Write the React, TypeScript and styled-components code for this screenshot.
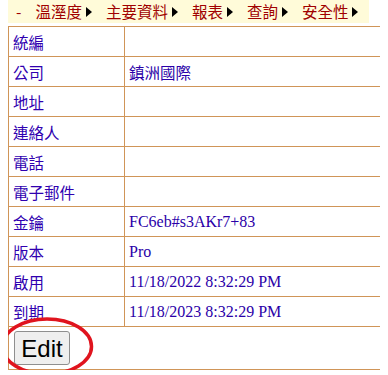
import React from "react";
import styled, { createGlobalStyle } from "styled-components";

const Global = createGlobalStyle`
  html, body { margin: 0; padding: 0; background: #fff; }
  body { margin: 0 8px; font-family: "Liberation Serif", serif; }
`;

const Page = styled.div`
  position: relative;
  width: 375px;
`;

const MenuBar = styled.div`
  display: flex;
  align-items: center;
  width: 361px;
  height: 23px;
  background: #fffbd9;
  font-family: "Noto Sans CJK TC", "Noto Sans", sans-serif;
  font-size: 15.5px;
  color: #a00000;
  margin-bottom: 3px;
  white-space: nowrap;
`;

const MenuItem = styled.span<{ $first?: boolean }>`
  display: inline-flex;
  align-items: center;
  margin-left: ${(p) => (p.$first ? "8px" : "14px")};
  line-height: 23px;
`;

const Arrow = styled.span`
  display: inline-block;
  width: 0;
  height: 0;
  border-top: 5px solid transparent;
  border-bottom: 5px solid transparent;
  border-left: 6px solid #000;
  margin-left: 4px;
`;

const Table = styled.table`
  border-collapse: collapse;
  width: 375px;
`;

const Row = styled.tr``;

const Label = styled.td`
  border: 1px solid #d09558;
  width: 107px;
  height: 29px;
  padding: 0 4px;
  font-family: "Noto Sans CJK TC", "Noto Sans", sans-serif;
  font-size: 15.5px;
  color: #3000b0;
  vertical-align: middle;
`;

const Value = styled.td`
  border: 1px solid #d09558;
  height: 29px;
  padding: 0 4px;
  font-family: "Liberation Serif", serif;
  font-size: 16px;
  color: #2a00a8;
  vertical-align: middle;
`;

const CjkValue = styled(Value)`
  font-family: "Noto Sans CJK TC", "Noto Sans", sans-serif;
  font-size: 15.5px;
`;

const ButtonCell = styled.td`
  border: 1px solid #d09558;
  height: 42px;
  padding: 0 4px;
  vertical-align: middle;
`;

const EditButton = styled.button`
  font-family: "Liberation Sans", Arial, sans-serif;
  font-size: 24px;
  line-height: 27px;
  color: #000;
  background: #efefef;
  border: 1px solid #8f8f8f;
  border-radius: 3px;
  padding: 2px 6px;
  height: 34px;
  width: 56px;
  margin-left: 1px;
`;

const Circle = styled.svg`
  position: absolute;
  left: -8px;
  top: 317px;
  pointer-events: none;
`;

const rows: { label: string; value: string; cjk?: boolean }[] = [
  { label: "統編", value: "" },
  { label: "公司", value: "鎮洲國際", cjk: true },
  { label: "地址", value: "" },
  { label: "連絡人", value: "" },
  { label: "電話", value: "" },
  { label: "電子郵件", value: "" },
  { label: "金鑰", value: "FC6eb#s3AKr7+83" },
  { label: "版本", value: "Pro" },
  { label: "啟用", value: "11/18/2022 8:32:29 PM" },
  { label: "到期", value: "11/18/2023 8:32:29 PM" },
];

const menu = ["溫溼度", "主要資料", "報表", "查詢", "安全性"];

export default function App() {
  return (
    <>
      <Global />
      <Page>
        <MenuBar>
          <MenuItem $first>-</MenuItem>
          {menu.map((m) => (
            <MenuItem key={m}>
              {m}
              <Arrow />
            </MenuItem>
          ))}
        </MenuBar>
        <Table>
          <tbody>
            {rows.map((r) => (
              <Row key={r.label}>
                <Label>{r.label}</Label>
                {r.cjk ? <CjkValue>{r.value}</CjkValue> : <Value>{r.value}</Value>}
              </Row>
            ))}
            <Row>
              <ButtonCell colSpan={2}>
                <EditButton>Edit</EditButton>
              </ButtonCell>
            </Row>
          </tbody>
        </Table>
        <Circle width="100" height="62" viewBox="0 0 100 62">
          <ellipse cx="47" cy="29.5" rx="44.5" ry="27.5" fill="none" stroke="#e0141e" strokeWidth="3.5" />
        </Circle>
      </Page>
    </>
  );
}
